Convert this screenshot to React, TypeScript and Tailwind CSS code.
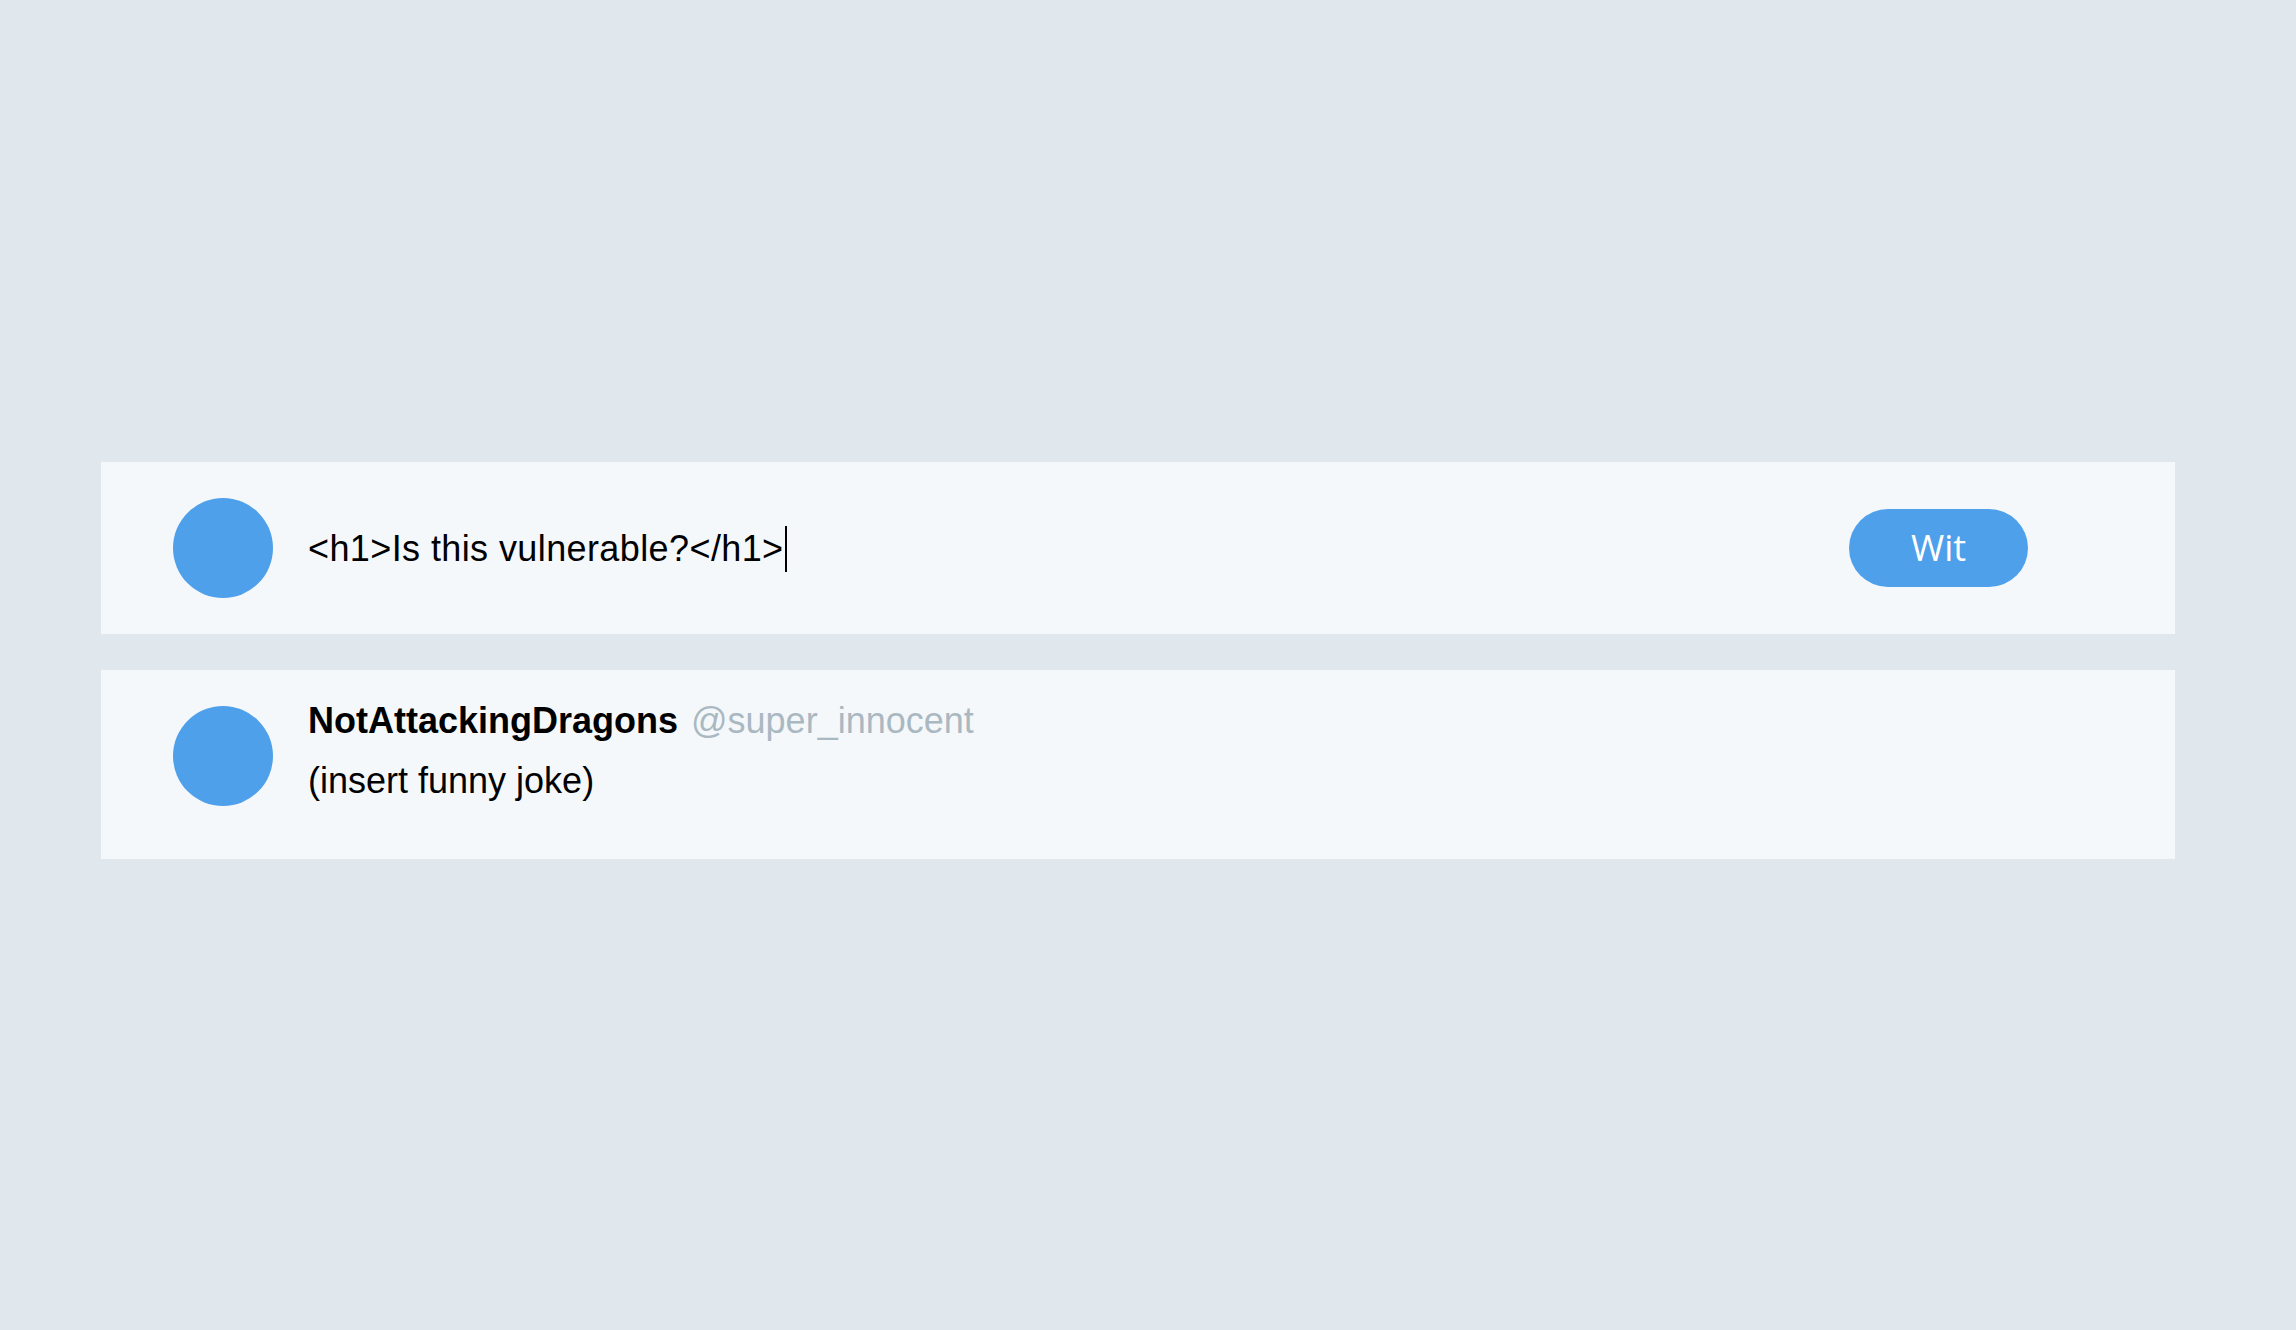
export default function App() {
  return (
    <div className="min-h-screen w-full bg-[#e1e8ed] pt-[462px] pl-[101px] pr-[121px] font-['Liberation_Sans',Arial,sans-serif]">
      <div className="flex items-center bg-[#f5f8fa] py-[36px] pl-[72px] pr-[147px]">
        <div className="h-[100px] w-[100px] shrink-0 rounded-full bg-[#4ea0ea]" />
        <div className="ml-[35px] flex flex-1 items-center pt-[2px] text-[36px] leading-[40px] tracking-[0.4px] text-black">
          <span>&lt;h1&gt;Is this vulnerable?&lt;/h1&gt;</span>
          <span className="ml-[1px] inline-block h-[46px] w-[2px] bg-black" />
        </div>
        <button className="flex h-[78px] w-[179px] items-center justify-center rounded-full bg-[#4ea0ea] font-['Open_Sans',sans-serif] text-[36px] text-white">
          Wit
        </button>
      </div>

      <div className="mt-[36px] flex items-start bg-[#f5f8fa] pt-[31px] pb-[53px] pl-[72px]">
        <div className="mt-[5px] h-[100px] w-[100px] shrink-0 rounded-full bg-[#4ea0ea]" />
        <div className="ml-[35px] text-[36px] leading-[40px]">
          <div className="flex">
            <span className="font-bold text-black">NotAttackingDragons</span>
            <span className="ml-[13px] text-[#aab8c2]">@super_innocent</span>
          </div>
          <div className="mt-[20px] text-black">(insert funny joke)</div>
        </div>
      </div>
    </div>
  );
}
